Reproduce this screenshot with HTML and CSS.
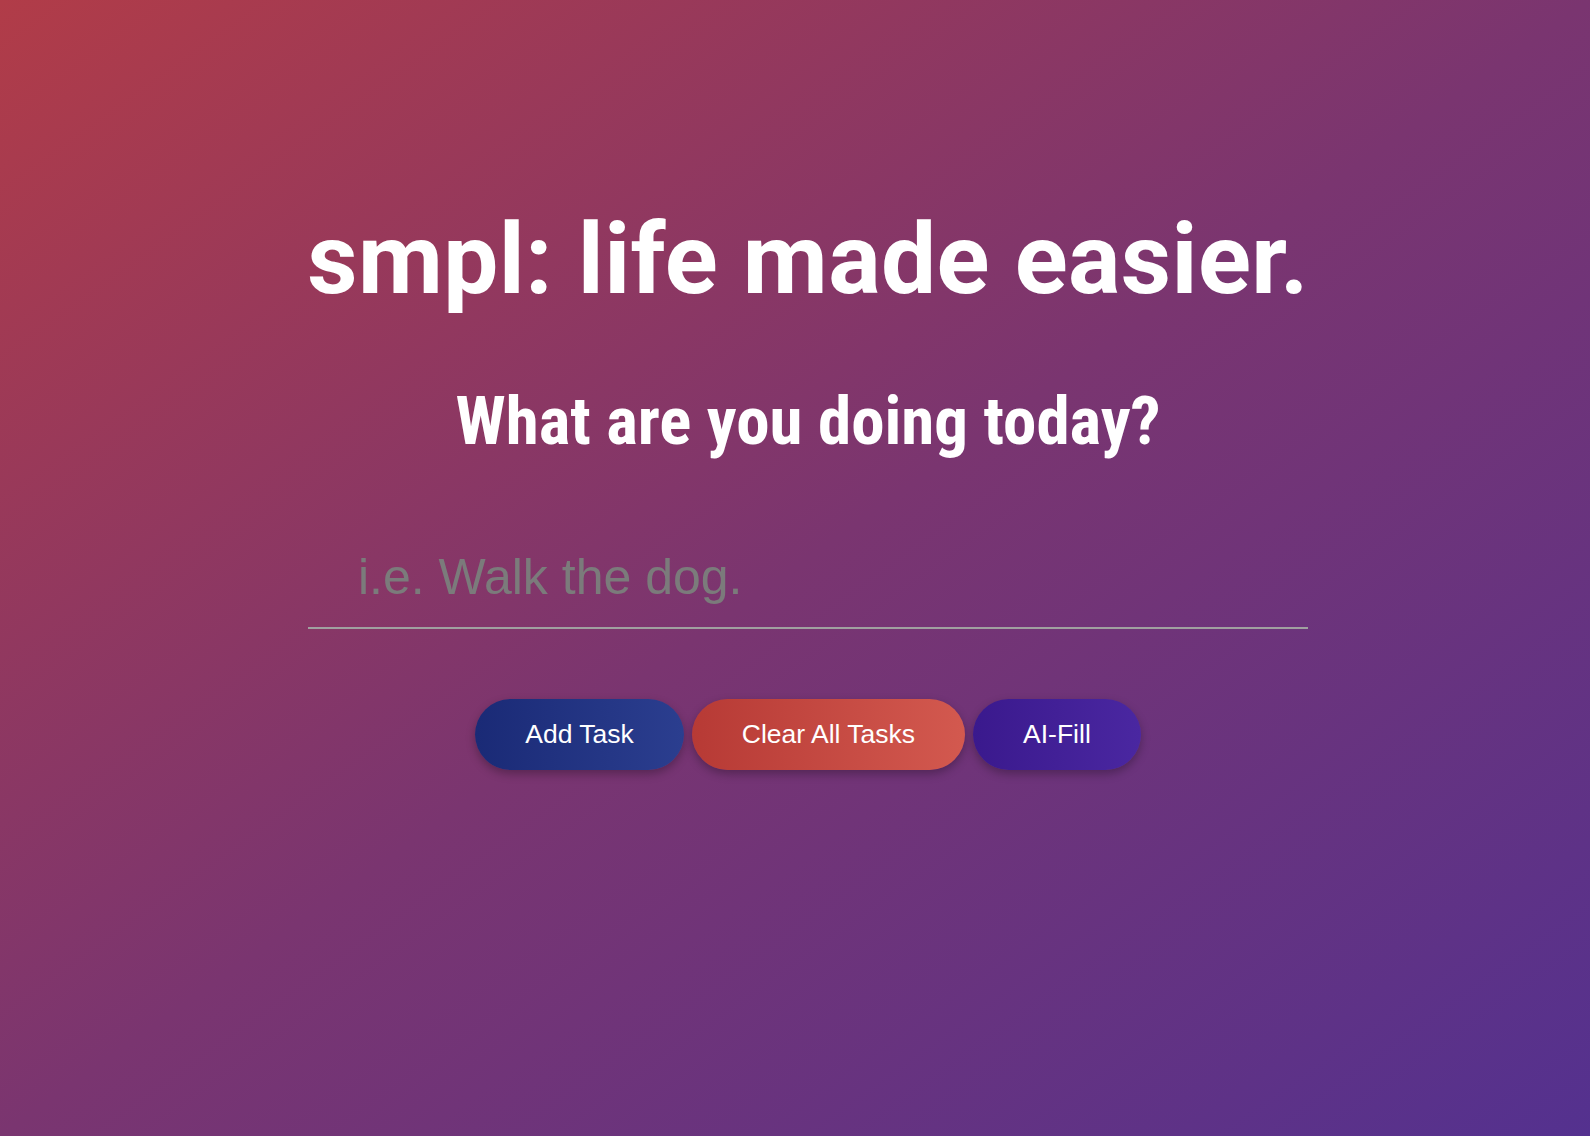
FILE: index.html
```html
<!DOCTYPE html>
<html lang="en">
<head>
<meta charset="utf-8">
<title>smpl</title>
<link rel="stylesheet" href="styles.css">
</head>
<body>
<main class="app">
  <h1 class="title">smpl: life made easier.</h1>
  <h2 class="subtitle">What are you doing today?</h2>
  <input class="task-input" type="text" placeholder="i.e. Walk the dog.">
  <div class="actions">
    <button class="btn btn-add">Add Task</button>
    <button class="btn btn-clear">Clear All Tasks</button>
    <button class="btn btn-ai">AI-Fill</button>
  </div>
</main>
</body>
</html>
```
FILE: styles.css
```css
html, body {
  margin: 0;
  height: 100%;
}
body {
  background: linear-gradient(to bottom right, #b13c48, #7a3570 50%, #54318f);
  font-family: Roboto, "Liberation Sans", sans-serif;
  color: #fff;
  min-height: 1136px;
}
.app {
  display: flex;
  flex-direction: column;
  align-items: center;
  padding-left: 26px;
  padding-top: 201px;
}
.title {
  margin: 0;
  font-size: 98px;
  font-weight: 700;
  letter-spacing: 0.4px;
  line-height: 1.2;
  white-space: nowrap;
}
.subtitle {
  margin: 62px 0 0;
  font-size: 67px;
  font-weight: 700;
  font-stretch: 75%;
  line-height: 1.2;
  white-space: nowrap;
}
.task-input {
  margin-top: 78px;
  width: 1000px;
  box-sizing: border-box;
  padding: 10px 50px 22px;
  background: transparent;
  border: none;
  border-bottom: 2px solid #a0a0a0;
  font-family: "Liberation Sans", Arial, sans-serif;
  font-size: 50px;
  line-height: 56px;
  height: 90px;
  color: #fff;
  outline: none;
}
.task-input::placeholder {
  color: #7b7b7b;
}
.actions {
  display: flex;
  gap: 8px;
  margin-top: 70px;
}
.btn {
  border: none;
  border-radius: 36px;
  height: 71px;
  padding: 0 50px;
  font-family: "Liberation Sans", Arial, sans-serif;
  font-size: 26.5px;
  color: #fff;
  box-shadow: 0 4px 10px rgba(0, 0, 0, 0.28);
  cursor: pointer;
}
.btn-add {
  background: linear-gradient(to right, #1a2a76, #2b3e8f);
}
.btn-clear {
  background: linear-gradient(to right, #b73a35, #d3594f);
}
.btn-ai {
  background: linear-gradient(to right, #3a198d, #4a27a1);
}
```
